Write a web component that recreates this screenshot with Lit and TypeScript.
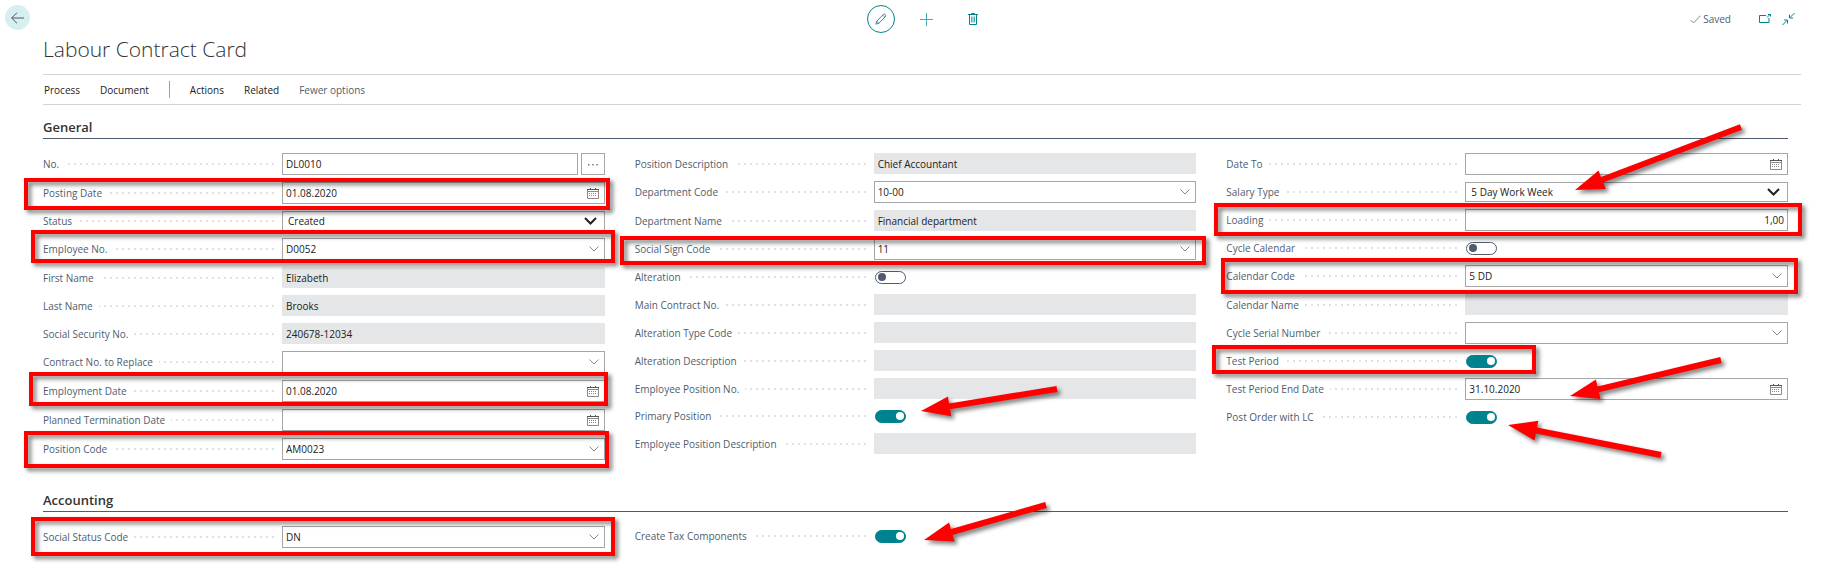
import { LitElement, html, svg, css, nothing } from "lit";
import { customElement } from "lit/decorators.js";

type Kind = "text" | "assist" | "date" | "lookup" | "select" | "readonly" | "number" | "toggle";

interface Field {
  label: string;
  kind: Kind;
  value?: string;
  on?: boolean;
}

const f = (label: string, kind: Kind, value = "", on = false): Field => ({ label, kind, value, on });

const GENERAL: Field[][] = [
  [
    f("No.", "assist", "DL0010"),
    f("Posting Date", "date", "01.08.2020"),
    f("Status", "select", "Created"),
    f("Employee No.", "lookup", "D0052"),
    f("First Name", "readonly", "Elizabeth"),
    f("Last Name", "readonly", "Brooks"),
    f("Social Security No.", "readonly", "240678-12034"),
    f("Contract No. to Replace", "lookup"),
    f("Employment Date", "date", "01.08.2020"),
    f("Planned Termination Date", "date"),
    f("Position Code", "lookup", "AM0023"),
  ],
  [
    f("Position Description", "readonly", "Chief Accountant"),
    f("Department Code", "lookup", "10-00"),
    f("Department Name", "readonly", "Financial department"),
    f("Social Sign Code", "lookup", "11"),
    f("Alteration", "toggle"),
    f("Main Contract No.", "readonly"),
    f("Alteration Type Code", "readonly"),
    f("Alteration Description", "readonly"),
    f("Employee Position No.", "readonly"),
    f("Primary Position", "toggle", "", true),
    f("Employee Position Description", "readonly"),
  ],
  [
    f("Date To", "date"),
    f("Salary Type", "select", "5 Day Work Week"),
    f("Loading", "number", "1,00"),
    f("Cycle Calendar", "toggle"),
    f("Calendar Code", "lookup", "5 DD"),
    f("Calendar Name", "readonly"),
    f("Cycle Serial Number", "lookup"),
    f("Test Period", "toggle", "", true),
    f("Test Period End Date", "date", "31.10.2020"),
    f("Post Order with LC", "toggle", "", true),
  ],
];

const ACCOUNTING: Field[][] = [
  [f("Social Status Code", "lookup", "DN")],
  [f("Create Tax Components", "toggle", "", true)],
  [],
];

// Outer edges of the highlight frames: left, top, right, bottom.
const FRAMES = [
  [24, 178, 610, 210],
  [31, 230, 615, 263],
  [29, 372, 608, 406],
  [24, 431, 609, 468],
  [31, 517, 615, 556],
  [620, 236, 1206, 265],
  [1214, 203, 1802, 236],
  [1221, 258, 1798, 294],
  [1212, 345, 1536, 374],
];

// Pointer arrows: tail x, tail y, tip x, tip y.
const ARROWS = [
  [1741, 127, 1575, 190],
  [1057, 389, 921, 411],
  [1046, 505, 924, 540],
  [1721, 360, 1570, 396],
  [1661, 455, 1508, 425],
];

function arrowPath([x1, y1, x2, y2]: number[]): string {
  const len = Math.hypot(x2 - x1, y2 - y1);
  const ux = (x2 - x1) / len;
  const uy = (y2 - y1) / len;
  const at = (along: number, side: number) =>
    `${(x1 + ux * along - uy * side).toFixed(1)} ${(y1 + uy * along + ux * side).toFixed(1)}`;
  const neck = len - 29;
  return `M${at(0, 3)}L${at(neck, 3)}L${at(neck, 10)}L${at(len, 0)}L${at(neck, -10)}L${at(neck, -3)}L${at(0, -3)}Z`;
}

const calendarIcon = html`<svg width="12" height="12" viewBox="0 0 12 12" fill="none" stroke="#8a8a8a" aria-hidden="true">
  <path d="M.5 2v9.500h11V2M.5 4.500h11" />
  <path d="M0 2.500h12M3.500 1v2M8.500 1v2" stroke="#555" />
  <path d="M2 6.500h8M2 8.500h8" stroke-dasharray="1 1" />
</svg>`;

const chevronIcon = html`<svg width="10" height="6" viewBox="0 0 10 6" fill="none" stroke="#888" aria-hidden="true">
  <path d="M.5 .5 5 5 9.500 .5" />
</svg>`;

@customElement("bc-field")
class BcField extends LitElement {
  static properties = { field: { attribute: false } };
  declare field: Field;

  static styles = css`
    :host { display: flex; }
    * { box-sizing: border-box; }
    .caption {
      flex: 0 0 239px;
      display: flex;
      align-items: center;
      padding-right: 8px;
      color: #505c6d;
      line-height: 14px;
      white-space: nowrap;
    }
    .dots {
      flex: 1;
      height: 2px;
      margin-left: 6px;
      background: repeating-linear-gradient(to left, #dfe1e4 0 2px, transparent 2px 6px);
    }
    .control { flex: 1; min-width: 0; display: flex; gap: 3px; }
    .box {
      flex: 1;
      min-width: 0;
      display: flex;
      align-items: center;
      height: 22px;
      border: 1px solid #a6a6a6;
      background: #fff;
    }
    input, select, button { font: inherit; color: #212121; margin: 0; }
    .entry {
      flex: 1;
      min-width: 0;
      height: 20px;
      padding: 0 3px;
      border: 0;
      background: none;
      outline: none;
    }
    .number { text-align: right; }
    .readonly { height: 21px; padding: 0 4px; background: #e5e6e8; }
    .picker { height: 20px; padding: 0 5px 0 0; border: 0; background: none; display: flex; align-items: center; }
    .more {
      width: 24px;
      height: 22px;
      padding: 0;
      border: 1px solid #a6a6a6;
      background: #fff;
      display: flex;
      align-items: center;
      justify-content: center;
    }
    .choice { flex: 1; min-width: 0; display: grid; align-items: center; }
    .select {
      grid-area: 1 / 1;
      width: 100%;
      height: 20px;
      padding: 0 5px;
      appearance: none;
      border: 1px solid #a6a6a6;
      border-radius: 0;
      background: #fff;
    }
    .arrow { grid-area: 1 / 1; justify-self: end; margin-right: 8px; pointer-events: none; }
    .switch { height: 20px; display: flex; align-items: center; padding-left: 1px; }
    .toggle {
      appearance: none;
      width: 31px;
      height: 13px;
      border: 1px solid #505c6d;
      border-radius: 7px;
      display: flex;
      align-items: center;
      padding: 0 2px;
    }
    .toggle::before { content: ""; width: 8px; height: 8px; border-radius: 50%; background: #505c6d; }
    .toggle:checked { border-color: #00838f; background: #00838f; justify-content: flex-end; padding: 0 1px; }
    .toggle:checked::before { background: #fff; }
  `;

  private control() {
    const { kind, value, on } = this.field;
    switch (kind) {
      case "readonly":
        return html`<input id="c" class="entry readonly" readonly .value=${value} />`;
      case "select":
        return html`<span class="choice">
          <select id="c" class="select"><option>${value}</option></select>
          <svg class="arrow" width="13" height="8" viewBox="0 0 13 8" fill="none" stroke="#222" stroke-width="2" aria-hidden="true">
            <path d="M1 1 6.500 6.500 12 1" />
          </svg>
        </span>`;
      case "toggle":
        return html`<span class="switch"><input id="c" class="toggle" type="checkbox" role="switch" .checked=${on} /></span>`;
      default:
        return html`<span class="box">
            <input id="c" class="entry ${kind}" .value=${value} />
            ${kind === "date" ? html`<button class="picker" aria-label="Choose date">${calendarIcon}</button>` : nothing}
            ${kind === "lookup" ? html`<button class="picker" aria-label="Look up value">${chevronIcon}</button>` : nothing}
          </span>
          ${kind === "assist"
            ? html`<button class="more" aria-label="Assist edit">
                <svg width="12" height="4" viewBox="0 0 12 4" fill="#777" aria-hidden="true">
                  <path d="M1 2h1.500v1.500H1zM5.200 2h1.500v1.500H5.200zM9.400 2h1.500v1.500h-1.500z" />
                </svg>
              </button>`
            : nothing}`;
    }
  }

  render() {
    return html`<label class="caption" for="c">${this.field.label}<span class="dots"></span></label>
      <div class="control">${this.control()}</div>`;
  }
}

@customElement("app-root")
class AppRoot extends LitElement {
  static styles = css`
    :host {
      display: block;
      position: relative;
      min-height: 100vh;
      background: #fff;
      color: #212121;
      font: 10px/14px "Open Sans", "Noto Sans", sans-serif;
    }
    * { box-sizing: border-box; }
    button { font: inherit; color: inherit; margin: 0; padding: 0; border: 0; background: none; }
    .topbar {
      display: grid;
      grid-template-columns: 16fr auto 15fr;
      align-items: center;
      padding: 5px 27px 0 5px;
    }
    .round {
      display: flex;
      align-items: center;
      justify-content: center;
      width: 28px;
      height: 28px;
      border-radius: 50%;
    }
    .back { width: 25px; height: 25px; background: #d7eff1; align-self: start; }
    .edit { border: 1px solid #00838f; }
    .tools { display: flex; gap: 18px; }
    .status { display: flex; align-items: center; justify-content: flex-end; color: #505c6d; }
    .saved { display: flex; align-items: center; gap: 2px; margin-right: 28px; }
    .window { display: flex; gap: 11px; }
    .window button { display: flex; }
    .title { margin: 0 0 9px; padding-left: 43px; font-size: 21px; line-height: 32px; font-weight: 300; color: #333; }
    .menu {
      display: flex;
      align-items: center;
      gap: 20px;
      height: 31px;
      margin: 0 21px 0 43px;
      padding-left: 1px;
      border: solid #d2d4d6;
      border-width: 1px 0;
    }
    .rule { width: 1px; height: 17px; background: #9aa1ab; }
    .fewer { color: #505c6d; }
    .section { margin: 0 34px 0 43px; }
    .general { padding-top: 13px; }
    .accounting { padding-top: 31px; }
    .heading {
      margin: 0 0 14px;
      padding-bottom: 1px;
      border-bottom: 1px solid #505c6d;
      font-size: 13px;
      line-height: 19px;
      font-weight: 600;
      color: #333;
    }
    .columns { display: grid; grid-template-columns: repeat(3, minmax(0, 1fr)); gap: 30px; }
    .column { display: flex; flex-direction: column; gap: 7px; }
    .notes {
      position: absolute;
      inset: 0;
      width: 100%;
      height: 100%;
      pointer-events: none;
      filter: drop-shadow(3px 3px 2px rgba(0, 0, 0, 0.5));
    }
  `;

  private section(name: string, id: string, columns: Field[][]) {
    return html`<section class="section ${id}">
      <h2 class="heading">${name}</h2>
      <div class="columns">
        ${columns.map((col) => html`<div class="column">${col.map((x) => html`<bc-field .field=${x}></bc-field>`)}</div>`)}
      </div>
    </section>`;
  }

  render() {
    return html`
      <header class="topbar">
        <button class="round back" aria-label="Back">
          <svg width="13" height="12" viewBox="0 0 13 12" fill="none" stroke="#555"><path d="M.7 6H13M6 .7.700 6 6 11.300" /></svg>
        </button>
        <div class="tools">
          <button class="round edit" aria-label="Edit">
            <svg width="12" height="12" viewBox="0 0 14 14" fill="none" stroke="#00838f">
              <path d="M1 13 2 9.500 10 1.500Q11 .7 12 1.800T12.300 4L4.500 12ZM2 9.500 4.500 12M9 2.500 11.500 5" />
            </svg>
          </button>
          <button class="round" aria-label="New">
            <svg width="13" height="13" viewBox="0 0 13 13" stroke="#4aa9b1"><path d="M0 6.500h13M6.500 0v13" /></svg>
          </button>
          <button class="round" aria-label="Delete">
            <svg width="10" height="12" viewBox="0 0 10 12" fill="none" stroke="#00838f">
              <path d="M0 1.500h10M3.500 1V.5h3V1M1.500 2v9.500h7V2" />
              <path d="M3.500 3.500v6M5 3.500v6M6.500 3.500v6" stroke="#4aa9b1" />
            </svg>
          </button>
        </div>
        <div class="status">
          <span class="saved">
            <svg width="11" height="9" viewBox="0 0 11 9" fill="none" stroke="#808893"><path d="M.5 5 3.500 8 10.500 .7" /></svg>
            Saved
          </span>
          <span class="window">
            <button aria-label="Open in new window">
              <svg width="12" height="12" viewBox="0 0 12 12" fill="none" stroke="#00838f">
                <path d="M7 2.500H.5v7h9.500V5M8 4.500 11.500 1M9 1.500h2.500v2" />
              </svg>
            </button>
            <button aria-label="Collapse">
              <svg width="13" height="12" viewBox="0 0 13 12" fill="none" stroke="#00838f">
                <path d="M12.500 0 8 4.500M7.500 1.500V5H11M.5 12 5 7.500M2 7h3.500v3.500" />
              </svg>
            </button>
          </span>
        </div>
      </header>
      <h1 class="title">Labour Contract Card</h1>
      <nav class="menu">
        <button>Process</button>
        <button>Document</button>
        <span class="rule"></span>
        <button>Actions</button>
        <button>Related</button>
        <button class="fewer">Fewer options</button>
      </nav>
      ${this.section("General", "general", GENERAL)} ${this.section("Accounting", "accounting", ACCOUNTING)}
      <svg class="notes" aria-hidden="true">
        ${FRAMES.map(
          ([l, t, r, b]) =>
            svg`<rect x=${l + 2} y=${t + 2} width=${r - l - 4} height=${b - t - 4} fill="none" stroke="#f00" stroke-width="4" />`
        )}
        ${ARROWS.map((a) => svg`<path d=${arrowPath(a)} fill="#f00" />`)}
      </svg>
    `;
  }
}
